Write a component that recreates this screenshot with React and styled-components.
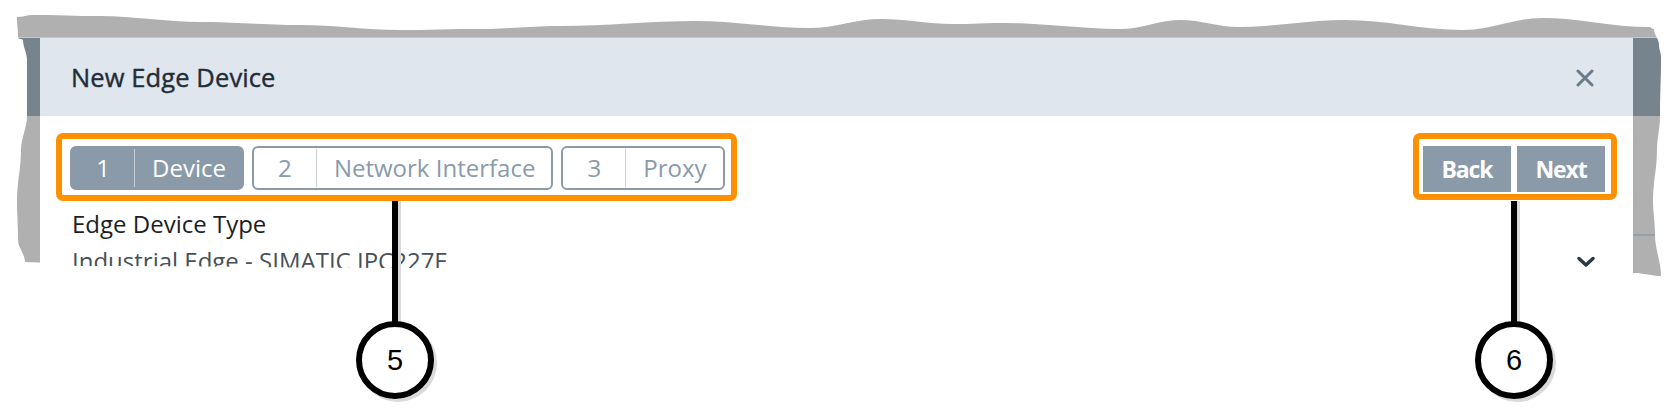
import React from 'react'
import styled, { createGlobalStyle } from 'styled-components'

const GlobalStyle = createGlobalStyle`
    html, body {
        margin: 0;
        padding: 0;
        background: #ffffff;
    }
`

const steps = [
    { id: 1, label: 'Device', active: true },
    { id: 2, label: 'Network Interface' },
    { id: 3, label: 'Proxy' },
]

const callouts = [
    { id: 5, x: 395 },
    { id: 6, x: 1514 },
]

// control points of the torn paper outline, clockwise from top-left
const topEdge = [[0, 2], [16, 0], [83, 1], [183, 7], [283, 10], [383, 15], [463, 14], [543, 11], [679, 6],
    [793, 13], [864, 4], [936, 9], [989, 8], [1103, 14], [1164, 5], [1221, 12], [1328, 5], [1446, 15],
    [1525, 3], [1632, 12], [1637, 14]]
const rightEdge = [[1637, 14], [1642, 30], [1644, 42], [1643, 101], [1640, 135], [1636, 185], [1638, 220], [1644, 261]]
const bottomEdge = [[1644, 261], [1617, 258], [1000, 255], [413, 253], [63, 251], [8, 247]]
const leftEdge = [[8, 247], [1, 225], [0, 185], [4, 135], [10, 101], [10, 45], [6, 25], [1, 23], [0, 2]]

function smooth(points, vertical) {
    const out = []
    for (let i = 0; i < points.length - 1; i++) {
        const [x0, y0] = points[i]
        const [x1, y1] = points[i + 1]
        for (let s = 0; s < 8; s++) {
            const t = s / 8
            const e = (1 - Math.cos(Math.PI * t)) / 2
            if (vertical) out.push([x0 + (x1 - x0) * e, y0 + (y1 - y0) * t])
            else out.push([x0 + (x1 - x0) * t, y0 + (y1 - y0) * e])
        }
    }
    return out
}

const tornEdge = [
    ...smooth(topEdge, false),
    ...smooth(rightEdge, true),
    ...smooth(bottomEdge, false),
    ...smooth(leftEdge, true),
].map(([x, y]) => `${x.toFixed(1)}px ${y.toFixed(1)}px`).join(', ')

function CloseIcon() {
    return (
        <svg width="18" height="18" viewBox="0 0 18 18">
            <path d="M2 2 L16 16 M16 2 L2 16" stroke="#6b7b87" strokeWidth="3" strokeLinecap="round" />
        </svg>
    )
}

function ChevronIcon() {
    return (
        <svg width="18" height="12" viewBox="0 0 18 12">
            <path d="M2 2.5 L9 9 L16 2.5" fill="none" stroke="#2c3841" strokeWidth="3.4" strokeLinecap="round" strokeLinejoin="round" />
        </svg>
    )
}

function App() {
    return (
        <Page>
            <GlobalStyle />
            <Sheet>
                <Row>
                    <Gutter $w={23} />
                    <Dialog>
                        <Header>
                            <Title>New Edge Device</Title>
                            <CloseIcon />
                        </Header>
                        <Body>
                            <Toolbar>
                                <Highlight $pad={[7, 6, 5, 8]}>
                                    <Steps>
                                        {steps.map((step) => (
                                            <Step key={step.id} $active={step.active}>
                                                <StepNum>{step.id}</StepNum>
                                                <StepLabel>{step.label}</StepLabel>
                                            </Step>
                                        ))}
                                    </Steps>
                                </Highlight>
                                <Highlight $pad={[7, 6, 2, 4]}>
                                    <Buttons>
                                        <NavButton>Back</NavButton>
                                        <NavButton>Next</NavButton>
                                    </Buttons>
                                </Highlight>
                            </Toolbar>
                            <FieldLabel>Edge Device Type</FieldLabel>
                            <Select>
                                <span>Industrial Edge - SIMATIC IPC227E</span>
                                <ChevronIcon />
                            </Select>
                        </Body>
                    </Dialog>
                    <Gutter $w={29} $line />
                </Row>
            </Sheet>
            {callouts.map((c) => (
                <Callout key={c.id} style={{ left: c.x }}>
                    <CalloutLine />
                    <CalloutCircle>{c.id}</CalloutCircle>
                </Callout>
            ))}
        </Page>
    )
}

const Page = styled.div`
    position: relative;
    width: 1673px;
    height: 418px;
    overflow: hidden;
    background: #ffffff;
    font-family: "Open Sans", "Noto Sans", sans-serif;
    padding-top: 15px;
    padding-left: 17px;
    box-sizing: border-box;
`

const Sheet = styled.div`
    width: 1645px;
    height: 262px;
    box-sizing: border-box;
    padding-top: 22px;
    background: linear-gradient(#b0b0b0 0 22px, transparent 22px);
    clip-path: polygon(${tornEdge});
`

const Row = styled.div`
    display: flex;
    height: 240px;
    border-top: 1px solid #c3c7ca;
`

const Gutter = styled.div`
    width: ${(p) => p.$w}px;
    flex-shrink: 0;
    background: ${(p) => p.$line
        ? 'linear-gradient(#77848d 0 78px, #b0b0b0 78px 196px, #95a0a8 196px 198px, #b0b0b0 198px)'
        : 'linear-gradient(#77848d 0 78px, #b0b0b0 78px)'};
`

const Dialog = styled.div`
    flex: 1;
    display: flex;
    flex-direction: column;
    background: #ffffff;
`

const Header = styled.div`
    height: 78px;
    flex-shrink: 0;
    display: flex;
    align-items: center;
    justify-content: space-between;
    padding: 0 39px 0 31px;
    background: #dfe6ee;
    svg{
        margin-top: 2px;
    }
`

const Title = styled.h2`
    margin: 0;
    font-size: 25.5px;
    font-weight: 400;
    color: #232d36;
    -webkit-text-stroke: 0.4px #232d36;
    letter-spacing: 0.1px;
`

const Body = styled.div`
    display: flex;
    flex-direction: column;
    padding: 30px 28px 0 30px;
`

const Toolbar = styled.div`
    display: flex;
    justify-content: space-between;
    align-items: flex-start;
`

const Highlight = styled.div`
    display: inline-flex;
    border: 6px solid #ff9100;
    border-radius: 7px;
    padding: ${(p) => p.$pad.map((v) => `${v}px`).join(' ')};
    margin: ${(p) => p.$pad.map((v) => `${-(v + 6)}px`).join(' ')};
    background: #ffffff;
`

const Steps = styled.div`
    display: flex;
    gap: 8px;
`

const Step = styled.div`
    display: flex;
    height: 44px;
    box-sizing: border-box;
    border: 2px solid #8a9aa9;
    border-radius: 6px;
    font-size: 24px;
    line-height: 40px;
    color: ${(p) => p.$active ? '#ffffff' : '#8a9aa9'};
    background: ${(p) => p.$active ? '#8a9aa9' : '#ffffff'};
    span + span{
        border-left-color: ${(p) => p.$active ? '#c3ccd4' : '#cfd3d7'};
    }
`

const StepNum = styled.span`
    width: 62px;
    text-align: center;
`

const StepLabel = styled.span`
    margin: 1px 0;
    line-height: 38px;
    padding: 0 16px 0 17px;
    border-left: 1px solid transparent;
`

const Buttons = styled.div`
    display: flex;
    gap: 6px;
`

const NavButton = styled.button`
    width: 88px;
    height: 46px;
    border: none;
    border-radius: 0;
    padding: 0;
    background: #8a9aa9;
    color: #ffffff;
    font-family: "Open Sans", "Noto Sans", sans-serif;
    font-size: 23px;
    font-weight: 700;
    letter-spacing: -1.1px;
`

const FieldLabel = styled.div`
    margin-top: 15px;
    margin-left: 2px;
    font-size: 24px;
    line-height: 33px;
    color: #1e1e1e;
`

const Select = styled.div`
    display: flex;
    align-items: center;
    justify-content: space-between;
    margin-top: 4px;
    padding: 0 10px 0 2px;
    font-size: 24px;
    line-height: 33px;
    color: #46515b;
    svg{
        margin-top: 3px;
    }
`

const Callout = styled.div`
    position: absolute;
    top: 201px;
    display: flex;
    flex-direction: column;
    align-items: center;
    transform: translateX(-50%);
`

const CalloutLine = styled.div`
    width: 6px;
    height: 122px;
    background: #000000;
    box-shadow: 3px 0 0 #d9d9d9;
`

const CalloutCircle = styled.div`
    width: 78px;
    height: 78px;
    margin-top: -2px;
    box-sizing: border-box;
    border: 6px solid #000000;
    border-radius: 50%;
    background: #ffffff;
    box-shadow: 3px 3px 0 #dadada;
    display: grid;
    place-items: center;
    font-family: "Liberation Sans", Arial, sans-serif;
    font-size: 29px;
    color: #000000;
`

export default App
